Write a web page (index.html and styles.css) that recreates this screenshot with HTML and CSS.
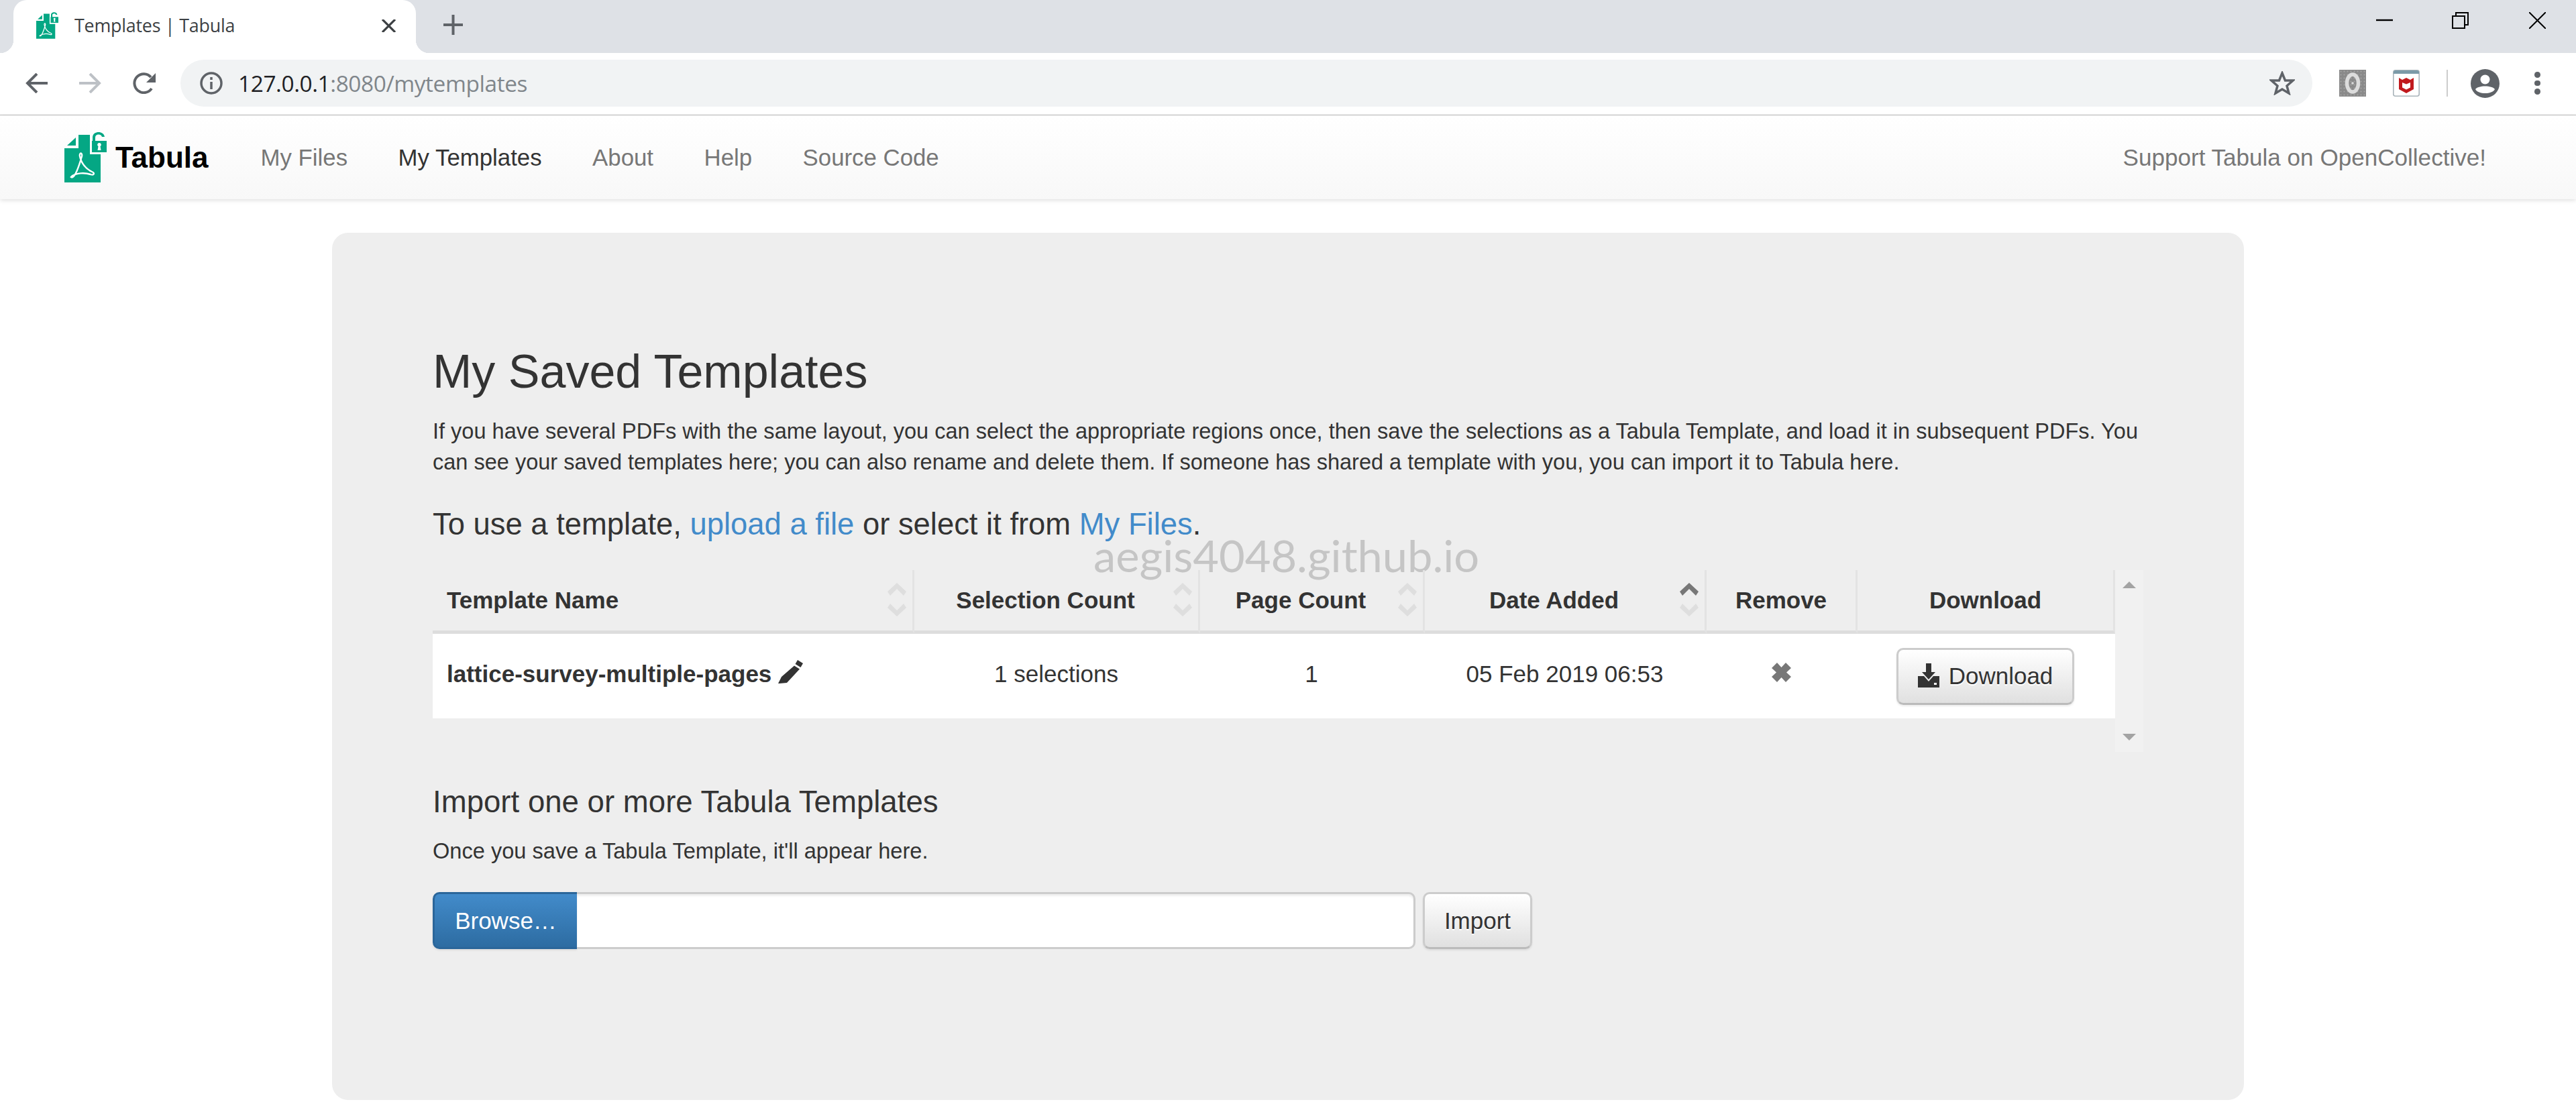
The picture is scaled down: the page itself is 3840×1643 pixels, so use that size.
FILE: index.html
```html
<!DOCTYPE html>
<html lang="en">
<head>
<meta charset="utf-8">
<title>Templates | Tabula</title>
<link rel="stylesheet" href="styles.css">
</head>
<body>
<svg class="defs" width="0" height="0" aria-hidden="true">
  <symbol id="logo" viewBox="0 0 63 75">
    <path fill="#04a784" d="M21 4H38V33H54V75H0V24H21Z"/>
    <path fill="#04a784" d="M4 20L17 8V20Z"/>
    <path fill="none" stroke="#fff" stroke-width="2.4" d="M10 67C15 71 22 50 26 36C27 30 22 30 23 36C25 46 32 55 41 59C46 61 44 65 39 63C30 60 18 61 12 65Z"/>
    <path fill="#04a784" d="M41 13H42V8C42 2 47 0 51 0C55 0 59 2 60 7H56C55 4 53 3.500 51 3.500C48 3.500 46 5 46 8V13H63V30H41Z"/>
    <path fill="#fff" d="M52 16a2.800 2.800 0 0 1 1.500 5.200L54.500 27H49.500L50.500 21.200A2.800 2.800 0 0 1 52 16Z"/>
  </symbol>
  <symbol id="sort-up" viewBox="0 0 28 19"><path d="M14 0L28 13L24 19L14 9L4 19L0 13Z"/></symbol>
  <symbol id="sort-down" viewBox="0 0 28 19"><path d="M14 19L28 6L24 0L14 10L4 0L0 6Z"/></symbol>
</svg>

<header class="tabstrip">
  <div class="tab">
    <svg class="favicon"><use href="#logo"/></svg>
    <span class="tab-title">Templates | Tabula</span>
    <svg class="tab-close" viewBox="0 0 21 19"><path d="M1 0L20 19M20 0L1 19" stroke="#3c4043" stroke-width="3.200" fill="none"/></svg>
  </div>
  <svg class="newtab" viewBox="0 0 29 30"><path d="M14.500 0V30M0 15H29" stroke="#5f6368" stroke-width="4" fill="none"/></svg>
  <div class="winctrls">
    <svg class="win-min" viewBox="0 0 25 25"><path d="M0 12H25" stroke="#000" stroke-width="2.400"/></svg>
    <svg class="win-restore" viewBox="0 0 25 25" fill="none" stroke="#000" stroke-width="2"><rect x="1" y="6" width="18" height="18"/><path d="M6 6V1H24V19H19"/></svg>
    <svg class="win-close" viewBox="0 0 25 25"><path d="M0 0L25 25M25 0L0 25" stroke="#000" stroke-width="2" fill="none"/></svg>
  </div>
</header>

<div class="toolbar">
  <svg class="tb-back" viewBox="0 0 33 30" fill="none" stroke="#5f6368" stroke-width="4"><path d="M33 15H3M17 1L3 15L17 29"/></svg>
  <svg class="tb-forward" viewBox="0 0 33 30" fill="none" stroke="#bdc1c6" stroke-width="4"><path d="M0 15H30M16 1L30 15L16 29"/></svg>
  <svg class="tb-reload" viewBox="0 0 34 32" fill="none"><path d="M28 24A14 14 0 1 1 27 7" stroke="#5f6368" stroke-width="4"/><path d="M34 1V15H20Z" fill="#5f6368"/></svg>
  <div class="omnibox">
    <svg class="info" viewBox="0 0 34 34" fill="none"><circle cx="17" cy="17" r="15" stroke="#5f6368" stroke-width="3.500"/><path d="M17 15V26M17 8V12" stroke="#5f6368" stroke-width="3.500"/></svg>
    <span class="url"><span class="url-host">127.0.0.1</span>:8080/mytemplates</span>
    <svg class="star" viewBox="0 0 38 36" fill="none"><path d="M19 3L23.500 14H35L26 22L29 33L19 27L9 33L12 22L3 14H14.500Z" stroke="#5f6368" stroke-width="3.500"/></svg>
  </div>
  <svg class="ext ext-zero" viewBox="0 0 40 40">
    <defs><pattern id="dots" width="5" height="5" patternUnits="userSpaceOnUse"><rect width="5" height="5" fill="#8a8a8a"/><circle cx="2.500" cy="2.500" r="1" fill="#a8a8a8"/></pattern></defs>
    <rect width="40" height="40" fill="url(#dots)"/>
    <ellipse cx="20" cy="20" rx="8.500" ry="13" fill="none" stroke="#dcdcdc" stroke-width="5.500"/>
    <circle cx="20" cy="20" r="1.800" fill="#dcdcdc"/>
  </svg>
  <svg class="ext ext-shield" viewBox="0 0 40 40">
    <rect x=".8" y=".8" width="38.400" height="38.400" rx="3" fill="#fff" stroke="#a9b4ba" stroke-width="1.600"/>
    <path d="M1 4a3 3 0 0 1 3-3H36a3 3 0 0 1 3 3V6H1Z" fill="#7b9aa8"/>
    <path d="M9 12L14 15L20 12L26 15L31 12V29L20 35L9 29ZM14 19V26.500L20 29.500L26 26.500V19L20 21.500Z" fill="#c01a1e" fill-rule="evenodd"/>
  </svg>
  <span class="tb-sep"></span>
  <svg class="avatar" viewBox="0 0 43 43"><circle cx="21.500" cy="21.500" r="21.500" fill="#5f6368"/><circle cx="21.500" cy="15.500" r="7" fill="#fff"/><path d="M7 30C11 24 32 24 36 30C32 38 11 38 7 30Z" fill="#fff"/></svg>
  <div class="dots"><i></i><i></i><i></i></div>
</div>

<nav class="navbar">
  <a class="brand"><svg class="brand-logo"><use href="#logo"/></svg>Tabula</a>
  <a class="nav-link nav-files">My Files</a>
  <a class="nav-link nav-active">My Templates</a>
  <a class="nav-link">About</a>
  <a class="nav-link">Help</a>
  <a class="nav-link">Source Code</a>
  <a class="nav-link nav-right">Support Tabula on OpenCollective!</a>
</nav>

<main class="main">
  <section class="panel">
    <div class="watermark">aegis4048.github.io</div>
    <h1 class="title">My Saved Templates</h1>
    <p class="intro">If you have several PDFs with the same layout, you can select the appropriate regions once, then save the selections as a Tabula Template, and load it in subsequent PDFs. You can see your saved templates here; you can also rename and delete them. If someone has shared a template with you, you can import it to Tabula here.</p>
    <p class="lead">To use a template, <a class="link">upload a file</a> or select it from <a class="link">My Files</a>.</p>

    <div class="table-wrap">
      <table class="templates">
        <colgroup>
          <col class="col-name"><col class="col-sel"><col class="col-page"><col class="col-date"><col class="col-remove"><col class="col-dl">
        </colgroup>
        <thead>
          <tr>
            <th class="th-left th-sort">Template Name<span class="sorter"><svg><use href="#sort-up"/></svg><svg><use href="#sort-down"/></svg></span></th>
            <th class="th-sort">Selection Count<span class="sorter"><svg><use href="#sort-up"/></svg><svg><use href="#sort-down"/></svg></span></th>
            <th class="th-sort">Page Count<span class="sorter"><svg><use href="#sort-up"/></svg><svg><use href="#sort-down"/></svg></span></th>
            <th class="th-sort">Date Added<span class="sorter"><svg class="sort-on"><use href="#sort-up"/></svg><svg><use href="#sort-down"/></svg></span></th>
            <th>Remove</th>
            <th class="th-last">Download</th>
          </tr>
        </thead>
        <tbody>
          <tr>
            <td class="td-name">lattice-survey-multiple-pages<svg class="pencil" viewBox="0 0 37 35"><path d="M29 0L37 5L33.500 11L25.500 6ZM24 8.500L32 13.500L13 34L2 35L0 35L5 25Z" fill="#333"/></svg></td>
            <td class="td-text">1 selections</td>
            <td class="td-text">1</td>
            <td class="td-text">05 Feb 2019 06:53</td>
            <td class="td-remove"><svg class="remove" viewBox="0 0 29 29"><path d="M8 0L14.500 7L21 0L29 8L22 14.500L29 21L21 29L14.500 22L8 29L0 21L7 14.500L0 8Z" fill="#777"/></svg></td>
            <td class="td-dl"><a class="btn btn-download"><svg class="dl-icon" viewBox="0 0 32 36"><path d="M12 0H20V13H26L16 24L6 13H12Z" fill="#333"/><path d="M0 19H9L16 27L23 19H32V36H0Z" fill="#333"/><rect x="24" y="29" width="4" height="3" fill="#fff"/></svg>Download</a></td>
          </tr>
        </tbody>
      </table>
      <div class="vscroll"><i class="arrow-up"></i><i class="arrow-down"></i></div>
    </div>

    <h2 class="subtitle">Import one or more Tabula Templates</h2>
    <p class="hint">Once you save a Tabula Template, it'll appear here.</p>
    <form class="import-row">
      <span class="btn-browse">Browse…</span>
      <span class="file-field"></span>
      <span class="btn btn-import">Import</span>
    </form>
  </section>
</main>
</body>
</html>
```
FILE: styles.css
```css
html, body { margin: 0; padding: 0; background: #fff; overflow: hidden; }
body { width: 3840px; height: 1643px; font-family: "Liberation Sans", Arial, sans-serif; font-size: 33.6px; color: #333; }
.defs { position: absolute; }
svg { display: block; flex: none; }

/* browser chrome */
.tabstrip { height: 79px; background: #dee1e6; display: flex; align-items: flex-start; }
.tab { position: relative; width: 600px; height: 79px; margin-left: 20px; background: #fff; border-radius: 20px 20px 0 0; display: flex; align-items: center; box-sizing: border-box; padding-left: 34px; }
.tab::before, .tab::after { content: ""; position: absolute; bottom: 0; width: 20px; height: 20px; }
.tab::before { left: -20px; background: radial-gradient(circle at 0 0, #dee1e6 20px, #fff 20.500px); }
.tab::after { right: -20px; background: radial-gradient(circle at 100% 0, #dee1e6 20px, #fff 20.500px); }
.favicon { width: 33px; height: 40px; margin-top: -3px; }
.tab-title { font-family: "Open Sans", sans-serif; font-size: 26.800px; color: #3c4043; margin-left: 24px; white-space: nowrap; width: 458px; margin-top: -4px; letter-spacing: -.2px; }
.tab-close { width: 21px; height: 19px; margin-top: -3px; }
.newtab { width: 29px; height: 30px; margin: 22px 0 0 41px; }
.winctrls { margin-left: auto; display: flex; height: 43px; align-items: flex-start; padding-top: 18px; }
.win-min, .win-restore, .win-close { width: 25px; height: 25px; }
.win-restore { margin-left: 88px; }
.win-close { margin: 0 45px 0 90px; }

.toolbar { box-sizing: border-box; background: #fff; display: flex; align-items: center; border-bottom: 1px solid #b8b8b8; height: 93px; padding: 10px 0 12px 38px; }
.tb-back, .tb-forward { width: 33px; height: 30px; }
.tb-forward { margin-left: 47px; }
.tb-reload { width: 34px; height: 32px; margin-left: 47px; }
.omnibox { width: 3178px; height: 70px; margin-left: 37px; border-radius: 35px; background: #f1f3f4; display: flex; align-items: center; padding-left: 29px; box-sizing: border-box; }
.info { width: 34px; height: 34px; }
.url { font-family: "Open Sans", sans-serif; font-size: 33.400px; color: #80868b; margin-left: 23px; white-space: nowrap; letter-spacing: -.4px; }
.url-host { color: #202124; }
.star { width: 38px; height: 36px; margin-left: auto; margin-right: 26px; }
.ext { width: 40px; height: 40px; }
.ext-zero { margin-left: 40px; }
.ext-shield { margin-left: 40px; }
.tb-sep { width: 2px; height: 40px; background: #ccc; margin-left: 40px; }
.avatar { width: 43px; height: 43px; margin-left: 34px; }
.dots { margin-left: 52px; display: flex; flex-direction: column; gap: 4px; }
.dots i { display: block; width: 8.500px; height: 8.500px; border-radius: 50%; background: #5f6368; }

/* navbar */
.navbar { height: 125px; box-sizing: border-box; background: linear-gradient(#fff, #f8f8f8); box-shadow: 0 2px 6px rgba(0,0,0,.12); display: flex; align-items: center; padding-left: 96px; }
.brand { display: flex; align-items: center; font-size: 44px; font-weight: 700; color: #000; margin-right: 78px; height: 100%; }
.brand-logo { width: 63px; height: 75px; margin-right: 13px; }
.nav-link { color: #777; font-size: 34.800px; margin-right: 75.500px; white-space: nowrap; }
.nav-active { color: #333; }
.nav-right { margin-left: auto; margin-right: 134px; font-size: 35.100px; }

/* main panel */
.main { padding: 50px 495px 0; }
.panel { position: relative; box-sizing: border-box; width: 2850px; height: 1293px; background: #eee; border-radius: 24px; padding: 167px 150px 0 150px; }
.watermark { position: absolute; left: 1135px; top: 435px; font-family: Lato, sans-serif; font-size: 66.800px; line-height: 90px; color: #c5c5c5; white-space: nowrap; }
.title { margin: 0 0 26px; font-size: 70px; line-height: 80px; font-weight: 400; }
.intro { margin: 0 -12px 40px 0; font-size: 32.530px; line-height: 46px; }
.lead { margin: 0 0 38px; font-size: 45.400px; line-height: 60px; }
.link { color: #428bca; }

.table-wrap { display: flex; height: 271px; }
.templates { width: 2508px; height: 221px; table-layout: fixed; border-collapse: separate; border-spacing: 0; font-size: 35px; }
.col-name { width: 718px; } .col-sel { width: 426px; } .col-page { width: 335px; } .col-date { width: 420px; } .col-remove { width: 225px; } .col-dl { width: 384px; }
.templates th { position: relative; height: 90px; padding: 0 21px; text-align: center; vertical-align: middle; font-weight: 700; box-sizing: content-box; border-right: 3px solid #e3e3e3; border-bottom: 5px solid #ddd; white-space: nowrap; }
.templates .th-sort { padding-right: 53px; }
.templates .th-left { text-align: left; }
.sorter { position: absolute; right: 9px; top: 19px; display: flex; flex-direction: column; gap: 12px; }
.sorter svg { width: 28px; height: 19px; fill: #dedede; }
.sorter .sort-on { fill: #777; }
.templates td { height: 126px; padding: 0 21px; background: #fff; text-align: center; vertical-align: middle; box-sizing: border-box; white-space: nowrap; }
.templates .td-name { text-align: left; font-weight: 700; padding-bottom: 7px; }
.templates .td-text { padding: 0 24px 7px 21px; }
.templates .td-remove { padding-right: 23px; }
.templates .td-dl { padding-right: 24px; }
.pencil { display: inline-block; width: 37px; height: 35px; margin-left: 10px; vertical-align: -2px; }
.remove { width: 29px; height: 29px; margin: 0 auto 11px; }
.vscroll { width: 42px; background: #f1f1f1; display: flex; flex-direction: column; justify-content: space-between; align-items: center; padding: 17px 0; box-sizing: border-box; }
.arrow-up, .arrow-down { display: block; width: 0; height: 0; border-left: 10px solid transparent; border-right: 10px solid transparent; }
.arrow-up { border-bottom: 10px solid #a3a3a3; }
.arrow-down { border-top: 10px solid #a3a3a3; }

.btn { display: inline-flex; align-items: center; justify-content: center; box-sizing: border-box; height: 85px; border: 3px solid #ccc; border-bottom-color: #bbb; border-radius: 10px; background: linear-gradient(#fff, #e0e0e0); box-shadow: 0 2px 3px rgba(0,0,0,.08); color: #333; text-shadow: 0 2px 0 #fff; font-size: 35px; }
.btn-download { width: 265px; }
.dl-icon { width: 32px; height: 36px; margin: -3px 14px 0 0; }

.subtitle { margin: 45px 0 20px; font-size: 45.600px; line-height: 60px; font-weight: 400; }
.hint { margin: 0 0 38px; font-size: 32.600px; line-height: 46px; }
.import-row { display: flex; height: 85px; }
.btn-browse { width: 215px; box-sizing: border-box; display: flex; align-items: center; justify-content: center; background: linear-gradient(#428bca, #2d6ca2); border: 3px solid #2b669a; border-right: 0; border-radius: 10px 0 0 10px; color: #fff; font-size: 35px; box-shadow: 0 2px 3px rgba(0,0,0,.08); }
.file-field { width: 1250px; box-sizing: border-box; background: #fff; border: 3px solid #ccc; border-left: 0; border-radius: 0 10px 10px 0; box-shadow: inset 0 3px 3px rgba(0,0,0,.07); }
.btn-import { width: 163px; margin-left: 11px; }
```
